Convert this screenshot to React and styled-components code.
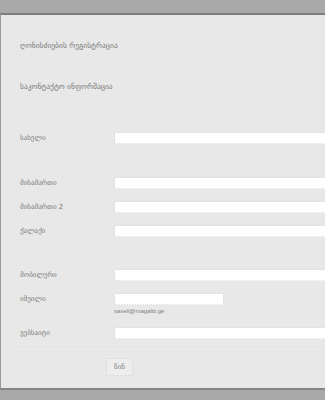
import React from "react";
import styled, { createGlobalStyle } from "styled-components";

const GlobalStyle = createGlobalStyle`
	html, body {
		margin: 0;
		padding: 0;
		background: #a9a9a9;
		overflow: hidden;
		font-family: "DejaVu Sans", "Liberation Sans", sans-serif;
		-webkit-font-smoothing: antialiased;
	}
`;

const Page = styled.div`
	width: 325px;
	height: 400px;
	padding-top: 13px;
	box-sizing: border-box;
	overflow: hidden;
`;

const Panel = styled.div`
	width: 380px;
	background: #e8e8e8;
	border-top: 2px solid #7c7c7c;
	border-left: 1px solid #9a9a9a;
	border-bottom: 2px solid #858585;
	padding: 25px 0 12px 19px;
	box-sizing: border-box;
`;

const Heading = styled.div`
	font-size: 7.5px;
	line-height: 12px;
	color: #777;
	margin-top: ${(p) => p.top || 0}px;
`;

const Row = styled.div`
	display: flex;
	align-items: ${(p) => (p.start ? "flex-start" : "center")};
	height: ${(p) => (p.tall ? "auto" : "24px")};
	margin-top: ${(p) => p.top || 0}px;
`;

const Label = styled.div`
	width: 94px;
	flex-shrink: 0;
	font-size: 7px;
	color: #7a7a7a;
	line-height: 24px;
`;

const Field = styled.div`
	display: flex;
	flex-direction: column;
	padding-top: ${(p) => (p.offset ? "6px" : "0")};
`;

const Input = styled.div`
	width: ${(p) => p.w || 240}px;
	height: 10px;
	background: #fff;
	border: 1px solid #e2e2e2;
	border-bottom: 1px dotted #e0e0e0;
`;

const Hint = styled.div`
	font-family: "Liberation Sans", Arial, sans-serif;
	font-size: 6px;
	line-height: 8px;
	color: #808080;
	margin-top: 2px;
`;

const Divider = styled.div`
	border-top: 1px dotted #dcdcdc;
	margin-top: 1px;
`;

const Button = styled.div`
	margin: 11px 0 0 86px;
	width: 25px;
	height: 16px;
	background: #ededed;
	border: 1px solid #e0e0e0;
	border-bottom: 1px dotted #d6d6d6;
	display: flex;
	align-items: center;
	justify-content: center;
	font-size: 7px;
	color: #808080;
`;

export default function App() {
	return (
		<Page>
			<GlobalStyle />
			<Panel>
				<Heading>ღონისძიების რეგისტრაცია</Heading>
				<Heading top={29}>საკონტაქტო ინფორმაცია</Heading>

				<Row top={33}>
					<Label>სახელი</Label>
					<Input />
				</Row>

				<Row top={21}>
					<Label>მისამართი</Label>
					<Input />
				</Row>
				<Row>
					<Label>მისამართი 2</Label>
					<Input />
				</Row>
				<Row>
					<Label>ქალაქი</Label>
					<Input />
				</Row>

				<Row top={20}>
					<Label>მობილური</Label>
					<Input />
				</Row>
				<Row start tall>
					<Label>იმეილი</Label>
					<Field offset>
						<Input w={108} />
						<Hint>saxeli@magaliti.ge</Hint>
					</Field>
				</Row>
				<Row top={6}>
					<Label>ვებსაიტი</Label>
					<Input />
				</Row>
				<Divider />
				<Button>წინ</Button>
			</Panel>
		</Page>
	);
}
